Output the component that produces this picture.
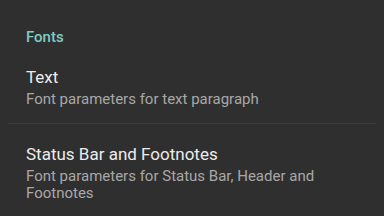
export default function App() {
  return (
    <div className="w-[384px] h-[216px] bg-[#2f2f2f] overflow-hidden font-['Roboto',sans-serif]">
      <div className="px-[26px] pt-[27px] text-[15px] font-medium text-[#80cbc4] leading-[20px]">Fonts</div>
      <div className="px-[26px] pt-[19px] pb-[13px]">
        <div className="text-[17px] text-[#ececec] leading-[22px]">Text</div>
        <div className="text-[15px] text-[#a8a8a8] leading-[22px]">Font parameters for text paragraph</div>
      </div>
      <div className="mx-[8px] h-px bg-[#3a3a3a]" />
      <div className="px-[26px] pt-[19px]">
        <div className="text-[17px] text-[#ececec] leading-[22px]">Status Bar and Footnotes</div>
        <div className="mt-[3px] text-[15px] text-[#a8a8a8] leading-[17px]">Font parameters for Status Bar, Header and Footnotes</div>
      </div>
    </div>
  )
}
